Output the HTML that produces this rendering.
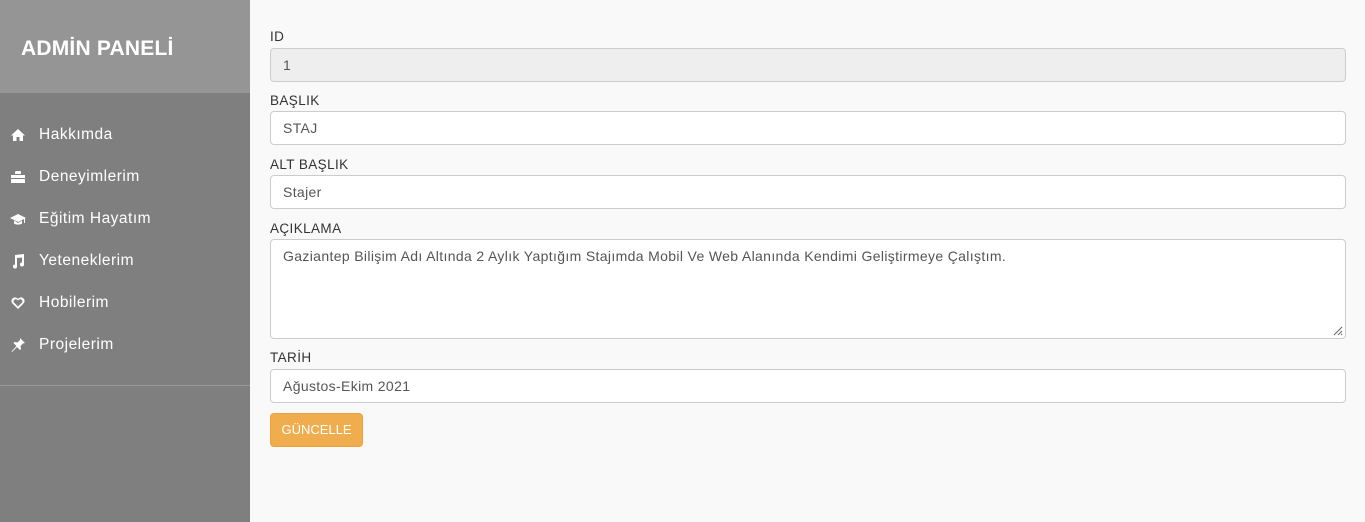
<!DOCTYPE html>
<html><head><meta charset="utf-8"><style>
*{box-sizing:border-box;margin:0;padding:0}
body{width:1365px;height:522px;overflow:hidden;background:#f9f9f9;font-family:"Liberation Sans",sans-serif;position:relative}
.side{position:absolute;left:0;top:0;width:250px;height:522px;background:#7f7f7f}
.head{height:93px;background:#959595;color:#fff;font-size:21px;font-weight:bold;padding:37px 0 0 21px;letter-spacing:0.2px}
.menu{position:absolute;top:120px;left:0;width:250px}
.item{height:42px;display:flex;align-items:center;color:#fff;font-size:15.5px;letter-spacing:0.5px;padding-left:10px}
.item svg{width:16px;height:16px;margin-right:13px;fill:#fff}
.line{position:absolute;top:385px;left:0;width:250px;height:1px;background:#9a9a9a}
.main{position:absolute;left:270px;top:0;width:1076px}
label{position:absolute;left:0;font-size:13.5px;letter-spacing:0.4px;color:#333}
.in{position:absolute;left:0;width:1076px;height:34px;border:1px solid #ccc;border-radius:4px;background:#fff;font-size:14px;letter-spacing:0.35px;color:#555;padding:8px 12px}
.btn{position:absolute;left:0;top:413px;width:93px;height:34px;background:#f0ad4e;border:1px solid #eea236;border-radius:4px;color:#fff;font-size:13px;text-align:center;line-height:32px}
.grip{position:absolute;right:2px;bottom:2px;width:12px;height:12px}
</style></head><body>
<div class="side">
<div class="head">ADMİN PANELİ</div>
<div class="menu">
<div class="item" style="margin-top:-6px"><svg viewBox="0 0 16 16"><path d="M8 2L1 8.5h2V14h3.5v-4h3v4H13V8.5h2z"/></svg>Hakkımda</div>
<div class="item"><svg viewBox="0 0 16 16"><path d="M6 3h4v2H6zM1 6h14v3H1zM1 10h14v4H1z M5 3a1 1 0 0 1 1-1h4a1 1 0 0 1 1 1v2H10V3H6v2H5z"/></svg>Deneyimlerim</div>
<div class="item"><svg viewBox="0 0 16 16"><path d="M8 3L0 7l8 4 6-3v4h1V7.5L16 7zM4 9.5v3c2 1.5 6 1.5 8 0v-3L8 12z"/></svg>Eğitim Hayatım</div>
<div class="item"><svg viewBox="0 0 16 16"><path d="M5 2l9-1v10.5a2 2 0 1 1-2-2V4.5L7 5v8.5a2 2 0 1 1-2-2z"/></svg>Yeteneklerim</div>
<div class="item"><svg viewBox="0 0 16 16"><path d="M8 14L2 8a3.3 3.3 0 0 1 6-4 3.3 3.3 0 0 1 6 4zM8 11.5l4.3-4.3A1.8 1.8 0 0 0 8 5.8 1.8 1.8 0 0 0 3.7 7.2z"/></svg>Hobilerim</div>
<div class="item"><svg viewBox="0 0 16 16"><path d="M10 1l5 5-2 .5-2.5 2.5.5 3-1 1-3-3L2 15l-.5-.5L6.5 9l-3-3 1-1 3 .5L10 3z"/></svg>Projelerim</div>
</div>
<div class="line"></div>
</div>
<div class="main">
<label style="top:29px">ID</label>
<div class="in" style="top:48px;background:#eee">1</div>
<label style="top:93px">BAŞLIK</label>
<div class="in" style="top:111px">STAJ</div>
<label style="top:157px">ALT BAŞLIK</label>
<div class="in" style="top:175px">Stajer</div>
<label style="top:221px">AÇIKLAMA</label>
<div class="in" style="top:239px;height:100px">Gaziantep Bilişim Adı Altında 2 Aylık Yaptığım Stajımda Mobil Ve Web Alanında Kendimi Geliştirmeye Çalıştım.<svg class="grip" viewBox="0 0 12 12"><path d="M11 3L3 11M11 7L7 11M11 10L10 11" stroke="#666" stroke-width="1"/></svg></div>
<label style="top:350px">TARİH</label>
<div class="in" style="top:369px">Ağustos-Ekim 2021</div>
<div class="btn">GÜNCELLE</div>
</div>
</body></html>
